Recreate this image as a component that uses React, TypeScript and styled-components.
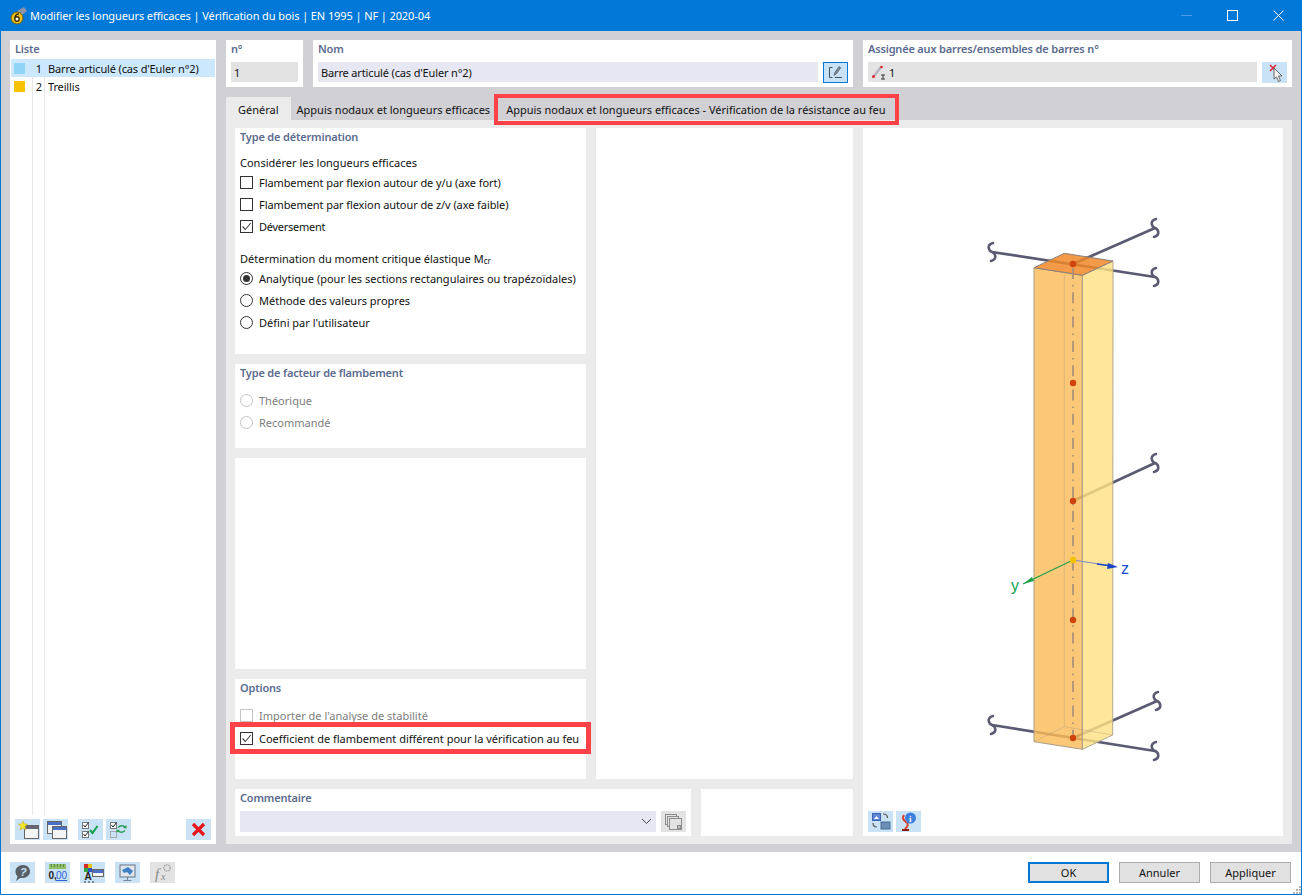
import React from 'react';
import styled, { createGlobalStyle } from 'styled-components';

const GlobalStyle = createGlobalStyle`
  html, body {
    margin: 0;
    padding: 0;
    background: #fff;
  }
  body {
    font-family: "Noto Sans", "Open Sans", sans-serif;
    font-size: 11px;
    color: #111;
  }
`

const Window = styled.div`
  display: flex;
  flex-direction: column;
  box-sizing: border-box;
  width: 1302px;
  height: 895px;
  border: 1px solid #0078d7;
  border-top: 0;
  overflow: hidden;
`

const TitleBar = styled.div`
  display: flex;
  align-items: center;
  flex: 0 0 31px;
  margin: 0 -1px;
  padding-left: 9px;
  background: #0078d7;
  color: #fff;
`

const TitleText = styled.span`
  margin-left: 1px;
  font-size: 11px;
  letter-spacing: -0.1px;
  white-space: nowrap;
`

const WindowButtons = styled.div`
  display: flex;
  margin-left: auto;
  margin-right: 1px;
`

const WindowButton = styled.div`
  display: flex;
  align-items: center;
  justify-content: center;
  width: 46px;
  height: 31px;
`

const Body = styled.div`
  display: flex;
  flex: 1;
  gap: 10px;
  min-height: 0;
  padding: 9px 9px 8px;
  background: #d0d0d5;
`

const ListPanel = styled.div`
  display: flex;
  flex-direction: column;
  flex: 0 0 206px;
  background: #fff;
`

const PanelTitle = styled.div`
  height: 18px;
  line-height: 18px;
  font-weight: 600;
  letter-spacing: -0.18px;
  color: #5b6b8f;
  white-space: nowrap;
`

const ListTitle = styled(PanelTitle)`
  margin: 0 5px 1px;
`

const List = styled.div`
  flex: 1;
  margin: 0 1px;
  background:
    linear-gradient(#e8e8e8, #e8e8e8) 21px 0 / 1px 100% no-repeat,
    linear-gradient(#e8e8e8, #e8e8e8) 33px 0 / 1px 100% no-repeat;
`

const ListRow = styled.div<{ $selected?: boolean }>`
  display: grid;
  grid-template-columns: 22px 12px 1fr;
  align-items: center;
  height: 18px;
  background: ${p => (p.$selected ? '#cce8ff' : 'transparent')};
`

const Swatch = styled.span<{ $color: string }>`
  width: 11px;
  height: 11px;
  margin-left: 3px;
  background: ${p => p.$color};
`

const RowNumber = styled.span`
  text-align: right;
  padding-right: 3px;
`

const RowLabel = styled.span`
  padding-left: 3px;
  letter-spacing: -0.15px;
  white-space: nowrap;
`

const ListToolbar = styled.div`
  display: flex;
  height: 25px;
  padding: 4px 5px 0;
`

const IconButton = styled.div<{ $disabled?: boolean; $active?: boolean; $gap?: number }>`
  display: flex;
  align-items: center;
  justify-content: center;
  box-sizing: border-box;
  flex: 0 0 25px;
  height: 21px;
  margin-left: ${p => p.$gap ?? 0}px;
  background: ${p => (p.$disabled ? '#e3e3e3' : '#c9e2f6')};
  border: ${p => (p.$active ? '1px solid #0078d7' : '0')};
`

const Main = styled.div`
  display: flex;
  flex-direction: column;
  flex: 1;
  min-width: 0;
`

const HeadRow = styled.div`
  display: flex;
  gap: 10px;
  height: 47px;
  margin-bottom: 10px;
`

const HeadBox = styled.div<{ $width: number }>`
  display: flex;
  flex-direction: column;
  flex: 0 0 ${p => p.$width}px;
  box-sizing: border-box;
  padding: 0 5px;
  background: #fff;
`

const FieldRow = styled.div`
  display: flex;
  gap: 5px;
  margin-top: 4px;
`

const Field = styled.div<{ $tone?: 'gray' | 'blue' }>`
  display: flex;
  align-items: center;
  gap: 2px;
  flex: 1;
  height: 20px;
  padding-left: 3px;
  letter-spacing: -0.15px;
  background: ${p => (p.$tone === 'blue' ? '#e6e7f2' : '#e3e3e3')};
  white-space: nowrap;
`

const Tabs = styled.div`
  display: flex;
  height: 23px;
`

const Tab = styled.div<{ $active?: boolean }>`
  height: 23px;
  line-height: 25px;
  padding: 0 ${p => (p.$active ? '12px' : '6px')};
  background: ${p => (p.$active ? '#ebebeb' : 'transparent')};
  white-space: nowrap;
`

const MarkedTab = styled.div`
  position: relative;
  z-index: 1;
  box-sizing: border-box;
  height: 23px;
  margin: 1px 0 0 2px;
  padding: 0 9px 0 8px;
  line-height: 23px;
  outline: 4px solid #ff4248;
  white-space: nowrap;
`

const TabPanel = styled.div`
  display: grid;
  flex: 1;
  grid-template-columns: 351px 257px 420px;
  grid-template-rows: 651px 47px;
  gap: 10px;
  padding: 8px 9px;
  background: #ebebeb;
`

const Column = styled.div`
  display: flex;
  flex-direction: column;
  gap: 10px;
`

const Section = styled.div<{ $height: number }>`
  box-sizing: border-box;
  height: ${p => p.$height}px;
  padding: 0 5px;
  background: #fff;
`

const Blank = styled.div`
  background: #fff;
`

const SideBlank = styled(Blank)`
  flex: 1;
`

const GroupLabel = styled.div<{ $top: number }>`
  height: 18px;
  line-height: 18px;
  margin-top: ${p => p.$top}px;
  white-space: nowrap;
`

const Sub = styled.sub`
  font-size: 8px;
  line-height: 0;
  vertical-align: -1px;
`

const OptionList = styled.div<{ $top?: number }>`
  display: flex;
  flex-direction: column;
  margin-top: ${p => p.$top ?? 0}px;
`

const Option = styled.label<{ $disabled?: boolean; $marked?: boolean; $spacing?: number }>`
  position: relative;
  display: flex;
  align-items: center;
  gap: 6px;
  box-sizing: border-box;
  height: 22px;
  margin: 0 ${p => (p.$marked ? '-5px' : '0')};
  padding-left: ${p => (p.$marked ? '5px' : '0')};
  padding-bottom: ${p => (p.$marked ? '0' : '2px')};
  color: ${p => (p.$disabled ? '#7d7d7d' : '#111')};
  letter-spacing: ${p => p.$spacing ?? 0}px;
  outline: ${p => (p.$marked ? '5px solid #ff4248' : '0')};
  white-space: nowrap;
`

const CheckBox = styled.span<{ $disabled?: boolean }>`
  display: flex;
  align-items: center;
  justify-content: center;
  box-sizing: border-box;
  flex: 0 0 13px;
  height: 13px;
  background: #fff;
  border: 1px solid ${p => (p.$disabled ? '#c4c4c4' : '#333')};
`

const Radio = styled.span<{ $checked?: boolean; $disabled?: boolean }>`
  display: flex;
  align-items: center;
  justify-content: center;
  box-sizing: border-box;
  flex: 0 0 13px;
  height: 13px;
  border: 1px solid ${p => (p.$disabled ? '#c4c4c4' : '#333')};
  border-radius: 50%;
  &::after {
    content: '';
    display: ${p => (p.$checked ? 'block' : 'none')};
    width: 7px;
    height: 7px;
    border-radius: 50%;
    background: #333;
  }
`

const BottomRow = styled.div`
  display: flex;
  gap: 10px;
  grid-column: 1 / 3;
`

const CommentBox = styled.div`
  flex: 0 0 456px;
  box-sizing: border-box;
  padding: 0 5px;
  background: #fff;
`

const CommentRow = styled.div`
  display: flex;
  gap: 5px;
  margin-top: 4px;
`

const Combo = styled.div`
  display: flex;
  align-items: center;
  justify-content: flex-end;
  flex: 1;
  height: 21px;
  padding-right: 4px;
  background: #e6e7f2;
`

const Preview = styled.div`
  display: flex;
  flex-direction: column;
  grid-column: 3;
  grid-row: 1 / 3;
  background: #fff;
`

const ModelSvg = styled.svg`
  display: block;
  width: 420px;
  height: 680px;
  font-family: "Liberation Sans", sans-serif;
`

const PreviewTools = styled.div`
  display: flex;
  gap: 3px;
  padding: 3px 5px 0;
`

const Footer = styled.div`
  position: relative;
  display: flex;
  align-items: flex-start;
  flex: 0 0 42px;
  box-sizing: border-box;
  padding: 10px 10px 0 9px;
  background: #fff;
`

const FooterTools = styled.div`
  display: flex;
  gap: 10px;
`

const FooterButtons = styled.div`
  display: flex;
  gap: 10px;
  margin-left: auto;
`

const DialogButton = styled.div<{ $primary?: boolean }>`
  box-sizing: border-box;
  width: 81px;
  height: 21px;
  line-height: ${p => (p.$primary ? '17px' : '19px')};
  text-align: center;
  background: #e1e1e1;
  border: ${p => (p.$primary ? '2px solid #0078d7' : '1px solid #adadad')};
`

const Grip = styled.svg`
  position: absolute;
  right: 0;
  bottom: 0;
`

const CheckMark = () => (
  <svg width="11" height="11" viewBox="0 0 11 11">
    <path d="M1.5 5.5 4.3 8.5 9.8 2" fill="none" stroke="#444" strokeWidth="1.1" />
  </svg>
)

const Win = ({ x, y, w = 15, h = 13, bar = '#4a6fc4' }: { x: number; y: number; w?: number; h?: number; bar?: string }) => (
  <g>
    <rect x={x + 0.5} y={y + 0.5} width={w} height={h} fill="#f4f4f4" stroke="#666" />
    <rect x={x + 1} y={y + 1} width={w - 1} height={3} fill={bar} />
  </g>
)

const AppIcon = () => (
  <svg width="20" height="20" viewBox="0 0 20 20">
    <path d="M8 5 15 1 18 5 12 10Z" fill="#8b93a8" />
    <circle cx="8" cy="12" r="6" fill="#f1c21b" stroke="#6b5a10" strokeWidth="1" />
    <circle cx="8" cy="13" r="2.2" fill="#fff" stroke="#3a3000" strokeWidth="1.4" />
    <path d="M6 12C6 9 8 8 10 8" fill="none" stroke="#3a3000" strokeWidth="1.4" />
  </svg>
)

const NewIcon = () => (
  <svg width="25" height="21" viewBox="0 0 25 21">
    <Win x={9} y={6} w={14} h={13} bar="#667" />
    <path d="M8 2 9.2 5 12.5 5 10 7.5 11 11 8 9 5 11 6 7.5 3.5 5 6.8 5Z" fill="#f5ea2a" stroke="#c2a800" strokeWidth="0.5" />
  </svg>
)

const CopyIcon = () => (
  <svg width="25" height="21" viewBox="0 0 25 21">
    <Win x={4} y={2} w={14} h={12} />
    <Win x={9} y={7} w={14} h={12} />
  </svg>
)

const CheckAllIcon = () => (
  <svg width="25" height="21" viewBox="0 0 25 21">
    <rect x="4.5" y="3.5" width="6" height="6" fill="#fff" stroke="#777" />
    <rect x="4.5" y="12.5" width="6" height="6" fill="#fff" stroke="#777" />
    <path d="M5.5 6 7 8 10.5 3.5M5.5 15 7 17 10.5 12.5" fill="none" stroke="#222" />
    <path d="M12 11 14.5 14 19.5 7" fill="none" stroke="#12a14b" strokeWidth="2" />
  </svg>
)

const ToggleIcon = () => (
  <svg width="25" height="21" viewBox="0 0 25 21">
    <rect x="4.5" y="3.5" width="6" height="6" fill="#fff" stroke="#777" />
    <rect x="4.5" y="12.5" width="6" height="6" fill="none" stroke="#aaa" />
    <path d="M5.5 6 7 8 10.5 3.5" fill="none" stroke="#222" />
    <path d="M12 8.5C14 6.5 17 6.5 19 8M19 11.5C17 13.5 14 13.5 12 12" fill="none" stroke="#2a9d55" strokeWidth="1.3" />
    <path d="M20.5 6 20.5 9.5 17 9ZM10.5 14 10.5 10.5 14 11Z" fill="#2a9d55" />
  </svg>
)

const DeleteIcon = () => (
  <svg width="25" height="21" viewBox="0 0 25 21">
    <path d="M7 5 18 16M18 5 7 16" stroke="#e8141c" strokeWidth="3.2" />
  </svg>
)

const HelpIcon = () => (
  <svg width="25" height="21" viewBox="0 0 25 21">
    <path d="M13 3C17.5 3 20 6 20 9.5 20 13 17 16 13 16H10L6 19 7.5 14.5C6 13 5.5 11.5 5.5 9.5 5.5 6 8.5 3 13 3Z" fill="#5a5f66" />
    <text x="10" y="14" fontSize="11" fontWeight="700" fill="#c9e2f6" fontFamily="Liberation Sans" fontStyle="italic">?</text>
  </svg>
)

const UnitsIcon = () => (
  <svg width="25" height="21" viewBox="0 0 25 21">
    <rect x="4" y="2" width="17" height="5" fill="#8fbf6a" />
    <path d="M6.5 2V5M9.5 2V5M12.5 2V5M15.5 2V5M18.5 2V5" stroke="#5e8c3e" />
    <text x="3.5" y="17" fontSize="10" fontWeight="700" fill="#222" fontFamily="Liberation Sans">0,</text>
    <text x="11" y="17" fontSize="10" fill="#2f62d9" fontFamily="Liberation Sans" textDecoration="underline">00</text>
  </svg>
)

const ColorsIcon = () => (
  <svg width="25" height="21" viewBox="0 0 25 21">
    <rect x="4" y="2" width="4" height="4" fill="#d62b2b" />
    <rect x="8" y="2" width="4" height="4" fill="#e6c417" />
    <rect x="4" y="6" width="4" height="4" fill="#2fa84a" />
    <rect x="8" y="6" width="4" height="4" fill="#2f55c9" />
    <Win x={12} y={7} w={11} h={7} />
    <text x="4.5" y="18" fontSize="10" fontWeight="700" fill="#222" fontFamily="Liberation Sans">A</text>
    <path d="M4 20H6M8 20H10M12 20H14" stroke="#333" />
  </svg>
)

const MonitorIcon = () => (
  <svg width="25" height="21" viewBox="0 0 25 21">
    <rect x="5" y="3" width="15" height="12" fill="#dfe6ee" stroke="#7c8794" strokeWidth="1.2" />
    <path d="M7 8 13 5 18 9 15 13 12 10 9 11Z" fill="#3f7fc4" />
    <path d="M12.5 15V18M8.5 18.5H16.5" stroke="#7c8794" strokeWidth="1.2" />
  </svg>
)

const FormulaIcon = () => (
  <svg width="25" height="21" viewBox="0 0 25 21">
    <text x="5" y="17" fontSize="15" fontStyle="italic" fill="#8a8a8a" fontFamily="Liberation Serif">f</text>
    <text x="11" y="18" fontSize="10" fontStyle="italic" fill="#8a8a8a" fontFamily="Liberation Serif">x</text>
    <circle cx="17" cy="6" r="3.2" fill="none" stroke="#9a9a9a" strokeWidth="1.2" strokeDasharray="1.5 0.8" />
  </svg>
)

const EditIcon = () => (
  <svg width="23" height="19" viewBox="0 0 23 19">
    <path d="M8.5 4.5H5.5V14.5H8.5M11 14.5H18" fill="none" stroke="#44505c" />
    <path d="M10 12.5 10.8 9.5 15 3.5 16.8 4.8 12.5 10.8Z" fill="#7b8894" stroke="#44505c" strokeWidth="0.6" />
  </svg>
)

const MemberIcon = () => (
  <svg width="16" height="16" viewBox="0 0 16 16">
    <path d="M3 12 10 3" stroke="#b3b3bd" strokeWidth="2.4" />
    <circle cx="2.5" cy="12.5" r="1.5" fill="#d8232a" />
    <circle cx="10.5" cy="3" r="1.3" fill="#d8232a" />
    <path d="M10 11H14M10 15H14M12 11V15" stroke="#333" />
  </svg>
)

const PickIcon = () => (
  <svg width="25" height="21" viewBox="0 0 25 21">
    <path d="M8 3 14 9M14 3 8 9" stroke="#e0202c" strokeWidth="1.5" />
    <path d="M12 6V17L14.5 15 16.5 19.5 18.5 18.5 16.5 14H20Z" fill="#f2f2f2" stroke="#666" />
  </svg>
)

const SwapViewIcon = () => (
  <svg width="25" height="21" viewBox="0 0 25 21">
    <rect x="4.5" y="2.5" width="8" height="7" fill="#5e86d6" stroke="#3d63b0" />
    <path d="M6 8 8.5 5 11 8Z" fill="#fff" />
    <path d="M15 3C18 3 19.5 5 19.5 7M5 12C5 15 7 16 9 16" fill="none" stroke="#555" strokeWidth="1.2" />
    <rect x="13" y="11" width="9" height="7" fill="#6b8fb5" stroke="#4c6d90" />
  </svg>
)

const InfoFigureIcon = () => (
  <svg width="25" height="21" viewBox="0 0 25 21">
    <path d="M8 4C6 7 7 9 10 11S12 15 9 18" fill="none" stroke="#d9432a" strokeWidth="2" />
    <path d="M6 19H13" stroke="#8a1f14" strokeWidth="2" />
    <circle cx="14.5" cy="7" r="5.5" fill="#3f7fe0" />
    <text x="13" y="10.5" fontSize="9" fontWeight="700" fill="#fff" fontFamily="Liberation Serif">i</text>
  </svg>
)

const StackIcon = () => (
  <svg width="25" height="21" viewBox="0 0 25 21">
    <rect x="4.5" y="3.5" width="11" height="10" fill="none" stroke="#8c8c8c" />
    <rect x="6.5" y="5.5" width="11" height="10" fill="#e3e3e3" stroke="#8c8c8c" />
    <rect x="8.5" y="7.5" width="12" height="11" fill="#e3e3e3" stroke="#8c8c8c" />
    <rect x="16.5" y="14.5" width="3" height="3" fill="#bbb" stroke="#8c8c8c" />
  </svg>
)

// one broken-line end of a support bar
const Squiggle = ({ x, y }: { x: number; y: number }) => (
  <path
    d={`M${x + 1} ${y - 9}C${x - 6} ${y - 7} ${x - 3} ${y - 1} ${x} ${y}C${x + 3} ${y + 1} ${x + 6} ${y + 7} ${x - 1} ${y + 9}`}
    fill="none"
    stroke="#5a5a72"
    strokeWidth="2.6"
    strokeLinecap="round"
  />
)

const Model = () => {
  const nodes = [264, 383, 501, 620, 738]
  const bars = [
    [992, 252, 1155, 277],
    [1073, 264, 1155, 228],
    [1073, 501, 1155, 463],
    [992, 725, 1155, 751],
    [1073, 738, 1157, 701],
  ]
  return (
    <ModelSvg viewBox="863 128 420 680">
      {bars.map(b => (
        <g key={b.join()}>
          <line x1={b[0]} y1={b[1]} x2={b[2]} y2={b[3]} stroke="#5a5a72" strokeWidth="2.7" />
          <Squiggle x={b[2]} y={b[3]} />
          {b[0] < 1000 && <Squiggle x={b[0]} y={b[1]} />}
        </g>
      ))}
      <polygon points="1082.3,275.3 1113,261 1112.7,735 1082.3,749.3" fill="#ffe084" fillOpacity="0.82" stroke="#b3a88c" />
      <polygon points="1034,267.7 1082.3,275.3 1082.3,749.3 1034,741.7" fill="#fabc59" fillOpacity="0.82" stroke="#a89c8c" />
      <polygon points="1034,267.7 1064.3,253.3 1113,261 1082.3,275.3" fill="#f08828" fillOpacity="0.85" stroke="#8d8078" />
      <path d="M1064.3 275V726.7M1034 741.7 1064.3 726.7 1112.7 735" fill="none" stroke="#b09a78" strokeOpacity="0.4" />
      <line x1="1073" y1="268" x2="1073" y2="738" stroke="#a8907a" strokeWidth="1.7" strokeDasharray="11 6 1.5 5.8" />
      <line x1="1073" y1="560" x2="1023" y2="584" stroke="#1ea04a" strokeWidth="1.2" />
      <polygon points="1023,584 1032,577 1034,581" fill="#1ea04a" />
      <line x1="1073" y1="560" x2="1112" y2="566" stroke="#7d8cc0" strokeWidth="1.2" />
      <line x1="1097" y1="564" x2="1112" y2="566" stroke="#1a44c8" strokeWidth="1.4" />
      <polygon points="1118,567 1108,563 1107,569" fill="#1a44c8" />
      {nodes.map(y => (
        <circle key={y} cx="1073" cy={y} r="3.2" fill="#d0430c" />
      ))}
      <circle cx="1073" cy="560" r="3.2" fill="#f2c200" />
      <text x="1011" y="591" fontSize="16" fill="#12a150">y</text>
      <text x="1121" y="574" fontSize="16" fill="#1a4ccf">z</text>
    </ModelSvg>
  )
}

type CheckProps = { label: string; checked?: boolean; disabled?: boolean; marked?: boolean; spacing?: number }

const Check = ({ label, checked, disabled, marked, spacing }: CheckProps) => (
  <Option $disabled={disabled} $marked={marked} $spacing={spacing}>
    <CheckBox $disabled={disabled}>{checked && <CheckMark />}</CheckBox>
    {label}
  </Option>
)

const RadioOption = ({ label, checked, disabled }: { label: string; checked?: boolean; disabled?: boolean }) => (
  <Option $disabled={disabled}>
    <Radio $checked={checked} $disabled={disabled} />
    {label}
  </Option>
)

export default function App() {
  return (
    <Window>
      <GlobalStyle />
      <TitleBar>
        <AppIcon />
        <TitleText>Modifier les longueurs efficaces | Vérification du bois | EN 1995 | NF | 2020-04</TitleText>
        <WindowButtons>
          <WindowButton>
            <svg width="11" height="11" viewBox="0 0 11 11"><path d="M0 5.5H11" stroke="#4d9de2" /></svg>
          </WindowButton>
          <WindowButton>
            <svg width="11" height="11" viewBox="0 0 11 11"><rect x="0.5" y="0.5" width="10" height="10" fill="none" stroke="#fff" /></svg>
          </WindowButton>
          <WindowButton>
            <svg width="11" height="11" viewBox="0 0 11 11"><path d="M0.5 0.5 10.5 10.5M10.5 0.5 0.5 10.5" stroke="#fff" /></svg>
          </WindowButton>
        </WindowButtons>
      </TitleBar>

      <Body>
        <ListPanel>
          <ListTitle>Liste</ListTitle>
          <List>
            <ListRow $selected>
              <Swatch $color="#90d5f8" />
              <RowNumber>1</RowNumber>
              <RowLabel>Barre articulé (cas d'Euler n°2)</RowLabel>
            </ListRow>
            <ListRow>
              <Swatch $color="#f8c300" />
              <RowNumber>2</RowNumber>
              <RowLabel>Treillis</RowLabel>
            </ListRow>
          </List>
          <ListToolbar>
            <IconButton><NewIcon /></IconButton>
            <IconButton $gap={3}><CopyIcon /></IconButton>
            <IconButton $gap={10}><CheckAllIcon /></IconButton>
            <IconButton $gap={3}><ToggleIcon /></IconButton>
            <IconButton $gap={55}><DeleteIcon /></IconButton>
          </ListToolbar>
        </ListPanel>

        <Main>
          <HeadRow>
            <HeadBox $width={77}>
              <PanelTitle>n°</PanelTitle>
              <FieldRow><Field>1</Field></FieldRow>
            </HeadBox>
            <HeadBox $width={540}>
              <PanelTitle>Nom</PanelTitle>
              <FieldRow>
                <Field $tone="blue">Barre articulé (cas d'Euler n°2)</Field>
                <IconButton $active><EditIcon /></IconButton>
              </FieldRow>
            </HeadBox>
            <HeadBox $width={429}>
              <PanelTitle>Assignée aux barres/ensembles de barres n°</PanelTitle>
              <FieldRow>
                <Field><MemberIcon />1</Field>
                <IconButton><PickIcon /></IconButton>
              </FieldRow>
            </HeadBox>
          </HeadRow>

          <Tabs>
            <Tab $active>Général</Tab>
            <Tab>Appuis nodaux et longueurs efficaces</Tab>
            <MarkedTab>Appuis nodaux et longueurs efficaces - Vérification de la résistance au feu</MarkedTab>
          </Tabs>

          <TabPanel>
            <Column>
              <Section $height={226}>
                <PanelTitle>Type de détermination</PanelTitle>
                <GroupLabel $top={8}>Considérer les longueurs efficaces</GroupLabel>
                <OptionList>
                  <Check label="Flambement par flexion autour de y/u (axe fort)" spacing={-0.08} />
                  <Check label="Flambement par flexion autour de z/v (axe faible)" spacing={-0.08} />
                  <Check label="Déversement" checked spacing={-0.25} />
                </OptionList>
                <GroupLabel $top={12}>Détermination du moment critique élastique M<Sub>cr</Sub></GroupLabel>
                <OptionList>
                  <RadioOption label="Analytique (pour les sections rectangulaires ou trapézoïdales)" checked />
                  <RadioOption label="Méthode des valeurs propres" />
                  <RadioOption label="Défini par l'utilisateur" />
                </OptionList>
              </Section>
              <Section $height={84}>
                <PanelTitle>Type de facteur de flambement</PanelTitle>
                <OptionList $top={8}>
                  <RadioOption label="Théorique" disabled />
                  <RadioOption label="Recommandé" disabled />
                </OptionList>
              </Section>
              <Section $height={211} />
              <Section $height={100}>
                <PanelTitle>Options</PanelTitle>
                <OptionList $top={8}>
                  <Check label="Importer de l'analyse de stabilité" disabled />
                  <Check label="Coefficient de flambement différent pour la vérification au feu" checked marked />
                </OptionList>
              </Section>
            </Column>

            <Blank />

            <Preview>
              <Model />
              <PreviewTools>
                <IconButton><SwapViewIcon /></IconButton>
                <IconButton><InfoFigureIcon /></IconButton>
              </PreviewTools>
            </Preview>

            <BottomRow>
              <CommentBox>
                <PanelTitle>Commentaire</PanelTitle>
                <CommentRow>
                  <Combo>
                    <svg width="11" height="7" viewBox="0 0 11 7"><path d="M1 1 5.5 5.5 10 1" fill="none" stroke="#444" /></svg>
                  </Combo>
                  <IconButton $disabled><StackIcon /></IconButton>
                </CommentRow>
              </CommentBox>
              <SideBlank />
            </BottomRow>
          </TabPanel>
        </Main>
      </Body>

      <Footer>
        <FooterTools>
          <IconButton><HelpIcon /></IconButton>
          <IconButton><UnitsIcon /></IconButton>
          <IconButton><ColorsIcon /></IconButton>
          <IconButton><MonitorIcon /></IconButton>
          <IconButton $disabled><FormulaIcon /></IconButton>
        </FooterTools>
        <FooterButtons>
          <DialogButton $primary>OK</DialogButton>
          <DialogButton>Annuler</DialogButton>
          <DialogButton>Appliquer</DialogButton>
        </FooterButtons>
        <Grip width="9" height="9" viewBox="0 0 9 9">
          <path d="M7 1H9V3H7ZM4 4H6V6H4ZM7 4H9V6H7ZM1 7H3V9H1ZM4 7H6V9H4ZM7 7H9V9H7Z" fill="#b5b5b5" />
        </Grip>
      </Footer>
    </Window>
  )
}
